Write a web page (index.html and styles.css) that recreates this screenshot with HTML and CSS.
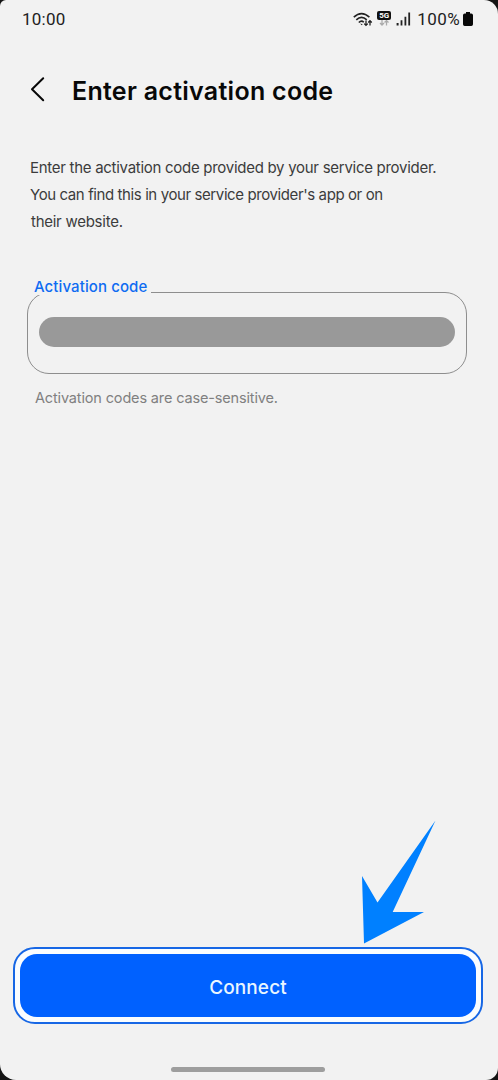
FILE: index.html
```html
<!DOCTYPE html>
<html lang="en">
<head>
<meta charset="utf-8">
<title>Enter activation code</title>
<link rel="stylesheet" href="styles.css">
</head>
<body>
<main class="screen">
  <header class="status">
    <span class="clock">10:00</span>
    <div class="indicators">
      <svg class="wifi" width="20" height="16" viewBox="0 0 20 16" fill="none" stroke="#222" stroke-width="1.6">
        <path d="M.8 5.2Q8.5-2 16.400 5.200M3.300 7.900Q8.500 3 13.800 7.900M5.800 10.500Q8.500 8 10.800 10.300"/>
        <path d="M7.200 11.600L8.700 13.200L9.700 12.200Z" fill="#222" stroke="none"/>
        <path d="M13 8.600V13.300M11.200 11.600L13 13.400L14.800 11.600M17 13.500V8.800M15.200 10.500L17 8.700L18.800 10.500" stroke-width="1.300"/>
      </svg>
      <div class="network">
        <span class="badge">5G</span>
        <svg width="12" height="6" viewBox="0 0 12 6" fill="none" stroke="#aaa" stroke-width="1.300"><path d="M4 0V5M2 3L4 5L6 3M8.500 5.500V.7M6.500 2.500L8.500.6L10.500 2.500"/></svg>
      </div>
      <svg class="signal" width="15" height="14" viewBox="0 0 15 14" fill="#222"><path d="M.6 11h2v2.400h-2zM4.600 8.300h1.800v5.100H4.600zM8.500 4.700h1.800v8.700H8.500zM12.300.6h1.800v12.800h-1.800z"/></svg>
      <span class="percent">100%</span>
      <svg class="battery" width="10" height="14" viewBox="0 0 10 14" fill="#080808"><path d="M3 0h4v1.500h1.300Q10 1.500 10 3.200v9.100Q10 14 8.300 14H1.700Q0 14 0 12.300V3.200Q0 1.500 1.700 1.500H3z"/></svg>
    </div>
  </header>
  <div class="titlebar">
    <svg class="back" width="16" height="26" viewBox="0 0 16 26" fill="none" stroke="#080808" stroke-width="2" stroke-linecap="round" stroke-linejoin="round"><path d="M13.200 2.200L2 13.200L13.200 24.200"/></svg>
    <h1 class="title">Enter activation code</h1>
  </div>
  <p class="intro">
    <span class="line line-one">Enter the activation code provided by your service provider.</span>
    <span class="line line-two">You can find this in your service provider's app or on</span>
    <span class="line line-three">their website.</span>
  </p>
  <section class="field">
    <div class="outline"><div class="redacted"></div></div>
    <label class="label"><span class="label-text">Activation code</span></label>
  </section>
  <p class="hint">Activation codes are case-sensitive.</p>
  <footer class="actions">
    <div class="ring"><button class="connect" type="button"><span class="connect-text">Connect</span></button></div>
    <div class="home"></div>
  </footer>
  <svg class="pointer" width="76" height="124" viewBox="0 0 76 124" fill="#0080ff"><path d="M74.500.5L31.700 92H63L3 123.500L1 56L16.500 82.500Z"/></svg>
</main>
</body>
</html>
```

FILE: styles.css
```css
* { box-sizing: border-box; }

body {
  margin: 0;
  background: #141414;
  font-family: Inter, "Liberation Sans", sans-serif;
}

.screen {
  position: relative;
  display: flex;
  flex-direction: column;
  width: 498px;
  height: 1080px;
  overflow: hidden;
  background: #f2f2f2;
  border-radius: 6px 14px 12px 16px;
}

.status {
  display: flex;
  justify-content: space-between;
  height: 40px;
  padding: 0 25px 0 22px;
  font-family: Roboto, sans-serif;
  font-size: 17px;
  line-height: 38px;
  color: #222;
}

.indicators { display: flex; align-items: flex-start; }
.clock { letter-spacing: 0.25px; }
.wifi { margin: 12px 4px 0 0; }
.network { display: flex; flex-direction: column; align-items: center; width: 14px; margin-top: 11px; }
.badge {
  width: 14px;
  height: 9px;
  border-radius: 2px;
  background: #111;
  color: #fff;
  font-size: 8px;
  font-weight: 700;
  line-height: 9.5px;
  text-align: center;
}
.signal { margin: 12px 6px 0 5px; }
.percent { letter-spacing: 0.4px; margin-right: 3px; }
.battery { margin-top: 12px; }

.titlebar {
  display: flex;
  align-items: center;
  height: 98px;
  padding-left: 30px;
}
.title {
  margin: 4px 0 0 26px;
  font-size: 25px;
  font-weight: 600;
  line-height: 32px;
  letter-spacing: 0.28px;
  white-space: nowrap;
  color: #080808;
}

.intro {
  display: flex;
  flex-direction: column;
  align-items: flex-start;
  margin: 15.500px 0 0 30px;
  font-size: 15px;
  line-height: 27.3px;
  color: #3c3c3c;
  white-space: nowrap;
}
.line-one { letter-spacing: -0.28px; }
.line-two { letter-spacing: -0.4px; }
.line-three { margin-left: 1px; letter-spacing: -0.26px; }

.field { position: relative; height: 82px; margin: 56.500px 31px 0 27px; }
.outline {
  height: 82px;
  padding: 24px 11px;
  border: 1.500px solid #8e8e8e;
  border-radius: 22px;
}
.redacted { height: 30px; border-radius: 15px; background: #999; }
.label {
  position: absolute;
  top: -16px;
  left: 7px;
  width: 117px;
  height: 19px;
  background: #f2f2f2;
  font-size: 15px;
  font-weight: 500;
  line-height: 22px;
  letter-spacing: 0.1px;
  white-space: nowrap;
  color: #0f6cf2;
}

.hint {
  align-self: flex-start;
  margin: 13px 0 0 35px;
  font-size: 14.500px;
  line-height: 22px;
  letter-spacing: -0.15px;
  color: #808080;
}

.actions {
  display: flex;
  flex-direction: column;
  align-items: center;
  margin: auto 15px 8px 13px;
}
.ring {
  width: 470px;
  height: 77px;
  padding: 5px;
  border: 2px solid #1767e5;
  border-radius: 22px;
  background: #fafdff;
}
.connect {
  display: block;
  width: 100%;
  height: 63px;
  padding: 3px 0 0;
  border: 0;
  border-radius: 17px;
  background: #0061ff;
  color: #eaf6ff;
  font-family: inherit;
  font-size: 19px;
  font-weight: 500;
  letter-spacing: 0.1px;
}
.home {
  width: 154px;
  height: 5px;
  margin-top: 43px;
  border-radius: 3px;
  background: #9e9e9e;
}

.pointer { position: absolute; left: 361px; top: 820px; }
```
